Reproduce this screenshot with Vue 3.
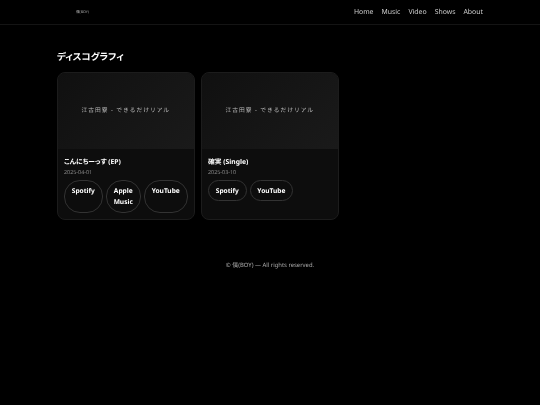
<script setup>
const navLinks = ["Home", "Music", "Video", "Shows", "About"];

const releases = [
  {
    title: "こんにちーっす (EP)",
    date: "2025-04-01",
    links: ["Spotify", "Apple Music", "YouTube"],
  },
  {
    title: "確実 (Single)",
    date: "2025-03-10",
    links: ["Spotify", "YouTube"],
  },
];
</script>

<template>
  <div class="page">
    <header class="site-header">
      <div class="header-inner">
        <a class="logo">僕(BOY)</a>
        <nav class="nav">
          <a v-for="link in navLinks" :key="link" class="nav-link">{{ link }}</a>
        </nav>
      </div>
    </header>

    <main class="content">
      <h2 class="section-title">ディスコグラフィ</h2>
      <div class="release-grid">
        <article v-for="release in releases" :key="release.title" class="release-card">
          <div class="cover">江古田寮 - できるだけリアル</div>
          <div class="card-body">
            <h3 class="release-title">{{ release.title }}</h3>
            <p class="release-date">{{ release.date }}</p>
            <div class="link-row">
              <a v-for="link in release.links" :key="link" class="pill">{{ link }}</a>
            </div>
          </div>
        </article>
      </div>
    </main>

    <footer class="site-footer">© 僕(BOY) — All rights reserved.</footer>
  </div>
</template>

<style>
html,
body {
  background: #000;
}
</style>

<style scoped>
.page {
  min-height: 405px;
  color: #fff;
  font-family: "Noto Sans", "Noto Sans CJK JP", sans-serif;
  font-feature-settings: "palt";
  text-rendering: geometricPrecision;
  filter: blur(0.2px);
}

.site-header {
  height: 25px;
  border-bottom: 1px solid #141414;
  box-sizing: border-box;
}

.header-inner {
  display: flex;
  justify-content: space-between;
  align-items: center;
  height: 24px;
  padding: 0 57px 0 76px;
}

.logo {
  font-size: 3.6px;
  color: #aaa;
}

.nav {
  display: flex;
  gap: 8px;
}

.nav-link {
  font-size: 6.9px;
  color: #ccc;
}

.content {
  padding: 25px 57px 0;
}

.section-title {
  margin: 0 0 8px;
  font-size: 9.4px;
  line-height: 14px;
  font-weight: 700;
}

.release-grid {
  display: grid;
  grid-template-columns: 137.5px 137.5px;
  gap: 6.5px;
}

.release-card {
  box-sizing: border-box;
  height: 148px;
  background: #0d0d0d;
  border: 1px solid #1c1c1c;
  border-radius: 8px;
  overflow: hidden;
}

.cover {
  box-sizing: border-box;
  display: flex;
  align-items: center;
  justify-content: center;
  height: 76px;
  padding-bottom: 3px;
  background: linear-gradient(135deg, #101010, #1a1a1a);
  color: #bbb;
  font-size: 5.75px;
  font-feature-settings: normal;
  letter-spacing: 1px;
}

.card-body {
  padding: 8px 6px 0;
}

.release-title {
  margin: 0;
  font-size: 6.75px;
  line-height: 10px;
  font-weight: 700;
}

.release-date {
  margin: 0;
  font-size: 5.4px;
  line-height: 10px;
  color: #888;
}

.link-row {
  display: flex;
  gap: 3px;
  margin-top: 3px;
  align-items: stretch;
}

.pill {
  padding: 4px 6.75px;
  border: 1px solid #333;
  border-radius: 16px;
  font-size: 6.6px;
  line-height: 11.25px;
  font-weight: 700;
  text-align: center;
}

.site-footer {
  margin-top: 40px;
  text-align: center;
  font-size: 5.9px;
  line-height: 10px;
  color: #aaa;
}
</style>
